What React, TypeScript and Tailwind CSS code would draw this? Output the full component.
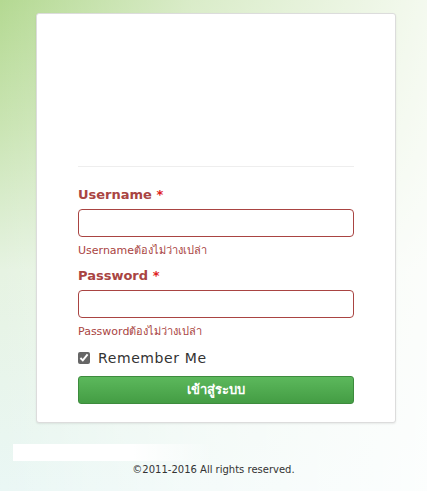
import { useState } from "react";

const fontStack = "font-['DejaVu_Sans',Verdana,'Noto_Sans',sans-serif]";

function Field({
  label,
  error,
  type,
}: {
  label: string;
  error: string;
  type: string;
}) {
  return (
    <div className="flex flex-col">
      <label className="text-[13px] font-bold leading-[20px] text-[#a94442]">
        {label} <span className="text-[#e02020]">*</span>
      </label>
      <input
        type={type}
        className="mt-[4px] h-[28px] w-full rounded-[4px] border border-[#a94442] bg-white px-2 text-[12px] outline-none"
      />
      <div className="mt-[6px] text-[11px] leading-[16px] text-[#a94442]">
        {error}
      </div>
    </div>
  );
}

export default function App() {
  const [remember, setRemember] = useState(true);

  return (
    <div
      className={`relative h-[491px] w-full overflow-hidden bg-[linear-gradient(180deg,#b4d992_0%,#c9e4b2_25%,#e6f3e2_55%,#eaf7f5_100%)] ${fontStack}`}
    >
      <div className="absolute inset-0 bg-[linear-gradient(90deg,rgba(255,255,255,0)_0%,rgba(255,255,255,0.5)_45%,rgba(255,255,255,0.85)_100%)]" />
      <div className="relative pt-[13px]">
        <div className="ml-[36px] w-[360px] rounded-[3px] border border-[#dcdcdc] bg-white px-[41px] pb-[18px] shadow-[0_1px_2px_rgba(0,0,0,0.08)]">
          <div className="h-[152px]" />
          <hr className="border-t border-[#eeeeee]" />
          <div className="mt-[18px] flex flex-col gap-[7px]">
            <Field label="Username" error="Usernameต้องไม่ว่างเปล่า" type="text" />
            <Field label="Password" error="Passwordต้องไม่ว่างเปล่า" type="password" />
          </div>
          <label className="mt-[8px] flex items-center gap-[8px] text-[14px] leading-[20px] tracking-[0.6px] text-[#333]">
            <input
              type="checkbox"
              checked={remember}
              onChange={(e) => setRemember(e.target.checked)}
              className="h-[12px] w-[12px] accent-[#666]"
            />
            Remember Me
          </label>
          <button className="mt-[8px] h-[28px] w-full rounded-[3px] border border-[#3d8b3d] bg-[linear-gradient(180deg,#5cb85c,#449d44)] text-[13px] font-bold text-white">
            เข้าสู่ระบบ
          </button>
        </div>
        <div className="mt-[21px] ml-[13px] h-[17px] w-[200px] bg-[linear-gradient(90deg,#ffffff_60%,rgba(255,255,255,0))]" />
        <p className="mt-[1px] text-center text-[10px] leading-[16px] text-[#333]">
          ©2011-2016 All rights reserved.
        </p>
      </div>
    </div>
  );
}
